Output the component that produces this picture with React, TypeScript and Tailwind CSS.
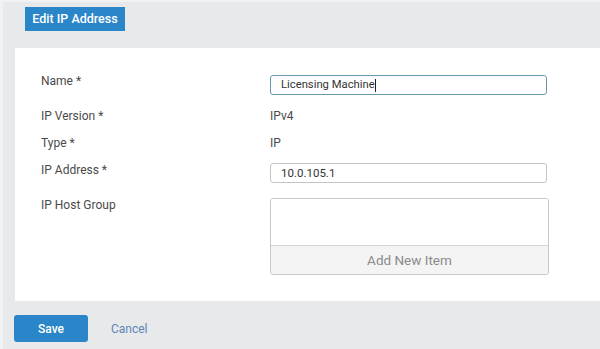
export default function App() {
  const font = { fontFamily: 'Roboto, "Liberation Sans", sans-serif' };
  return (
    <div
      className="w-[600px] h-[349px] bg-[#e8e9eb] border-l-[3px] border-t-[2px] border-[#f1f2f3] text-[12px] leading-[16px] text-[#4a4a4a] overflow-hidden"
      style={font}
    >
      <div className="pl-[22px] pt-[5px]">
        <div className="inline-flex items-center h-[24px] w-[100px] justify-center bg-[#2a86c8] text-white text-[12.5px] font-medium">
          Edit IP Address
        </div>
      </div>

      <div className="ml-[12px] mt-[17px] h-[253px] bg-white pt-[25px] pl-[26px]">
        <div className="flex items-start">
          <div className="w-[229px]">Name *</div>
          <div className="mt-[2px] w-[277px] h-[20px] flex items-center border border-[#6a9ab0] rounded-[3px] pl-[10px] text-[#333] text-[11.25px]">
            Licensing Machine<span className="w-px h-[13px] bg-[#222]" />
          </div>
        </div>

        <div className="flex items-start mt-[13px]">
          <div className="w-[229px]">IP Version *</div>
          <div>IPv4</div>
        </div>

        <div className="flex items-start mt-[11px]">
          <div className="w-[229px]">Type *</div>
          <div>IP</div>
        </div>

        <div className="flex items-start mt-[11px]">
          <div className="w-[229px]">IP Address *</div>
          <div className="mt-[1px] w-[277px] h-[20px] flex items-center border border-[#c4c4c4] rounded-[3px] pl-[10px] text-[#333] text-[11.5px]">
            10.0.105.1
          </div>
        </div>

        <div className="flex items-start mt-[14px]">
          <div className="w-[229px]">IP Host Group</div>
          <div className="mt-[1px] w-[279px] h-[77px] border border-[#c8c8c8] rounded-[3px] flex flex-col overflow-hidden">
            <div className="flex-1 bg-white" />
            <div className="h-[29px] border-t border-[#d6d6d6] bg-[#f4f4f5] flex items-center justify-center text-[#8a8a8a] text-[13.5px]">
              Add New Item
            </div>
          </div>
        </div>
      </div>

      <div className="flex items-center ml-[11px] mt-[14px]">
        <div className="w-[74px] h-[27px] rounded-[3px] bg-[#2a86c8] text-white font-medium flex items-center justify-center">
          Save
        </div>
        <div className="ml-[23px] text-[#5d86b5]">Cancel</div>
      </div>
    </div>
  );
}
